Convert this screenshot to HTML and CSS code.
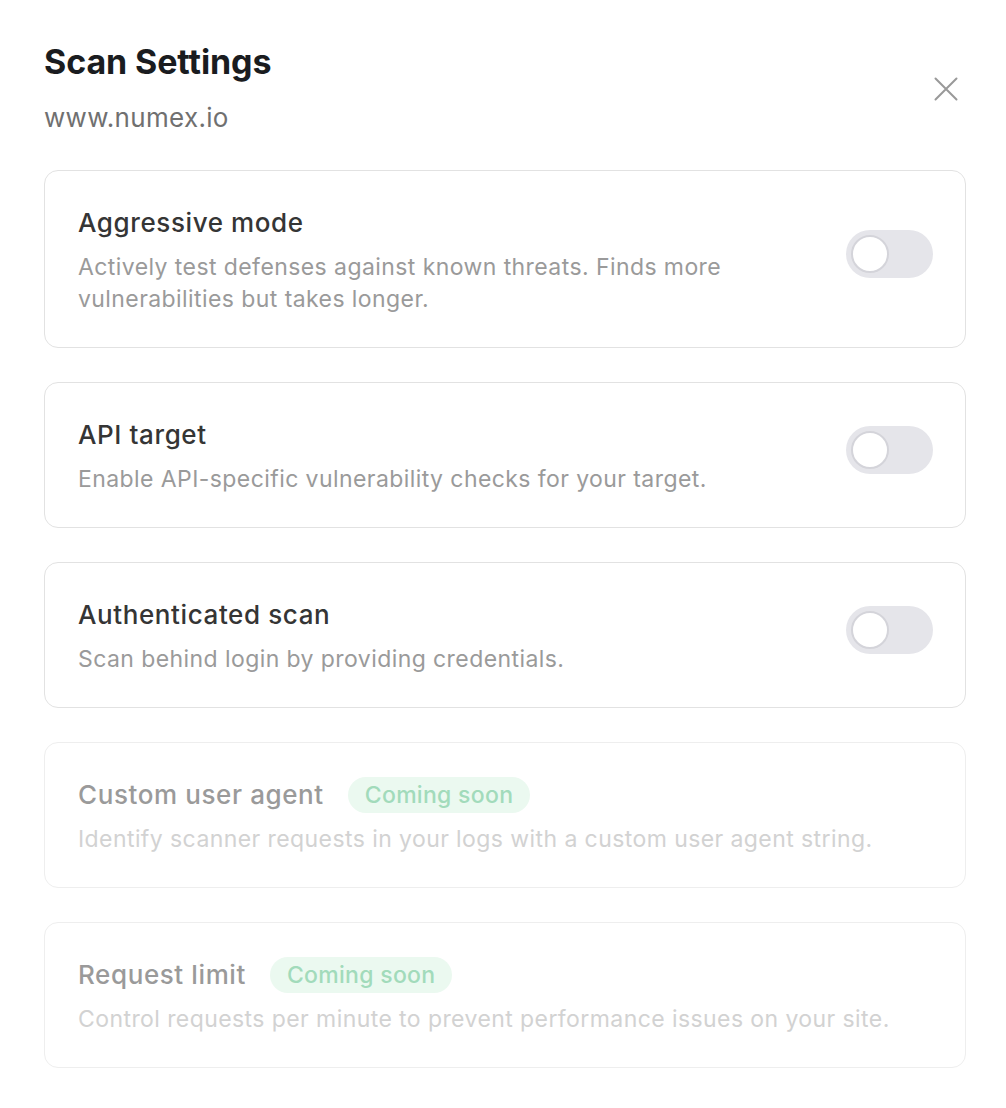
FILE: index.html
```html
<!DOCTYPE html>
<html lang="en">
  <head>
    <meta charset="UTF-8" />
    <meta name="viewport" content="width=device-width, initial-scale=1.0" />
    <title>Scan Settings</title>
    <link rel="stylesheet" href="styles.css">
  </head>
  <body>
    <div class="panel">
      <div class="panel-header">
        <div>
          <h1 class="panel-title">Scan Settings</h1>
          <div class="panel-sub">www.numex.io</div>
        </div>
        <button class="close-btn" aria-label="Close">
          <svg width="26" height="26" viewBox="0 0 26 26" fill="none" stroke="#999" stroke-width="2" stroke-linecap="round">
            <path d="M2.5 2.5 L23.5 23.5 M23.5 2.5 L2.5 23.5" />
          </svg>
        </button>
      </div>

      <div class="setting-list">
        <div class="setting">
          <div class="setting-text">
            <div class="setting-title">Aggressive mode</div>
            <div class="setting-desc">Actively test defenses against known threats. Finds more vulnerabilities but takes longer.</div>
          </div>
          <span class="toggle"><span class="knob"></span></span>
        </div>

        <div class="setting">
          <div class="setting-text">
            <div class="setting-title">API target</div>
            <div class="setting-desc">Enable API-specific vulnerability checks for your target.</div>
          </div>
          <span class="toggle"><span class="knob"></span></span>
        </div>

        <div class="setting">
          <div class="setting-text">
            <div class="setting-title">Authenticated scan</div>
            <div class="setting-desc">Scan behind login by providing credentials.</div>
          </div>
          <span class="toggle"><span class="knob"></span></span>
        </div>

        <div class="setting disabled">
          <div class="setting-text">
            <div class="setting-title">Custom user agent <span class="badge">Coming soon</span></div>
            <div class="setting-desc">Identify scanner requests in your logs with a custom user agent string.</div>
          </div>
        </div>

        <div class="setting disabled">
          <div class="setting-text">
            <div class="setting-title">Request limit <span class="badge">Coming soon</span></div>
            <div class="setting-desc">Control requests per minute to prevent performance issues on your site.</div>
          </div>
        </div>
      </div>
    </div>
  </body>
</html>
```

FILE: styles.css
```css
body {
  margin: 0;
  background: #fff;
  font-family: Inter, "Noto Sans", "Liberation Sans", sans-serif;
}

.panel {
  padding: 40px 40px 40px 44px;
}

.panel-header {
  display: flex;
  justify-content: space-between;
  align-items: flex-start;
}

.panel-title {
  margin: 0;
  font-size: 34px;
  line-height: 44px;
  font-weight: 700;
  letter-spacing: -0.1px;
  color: #1a1c20;
}

.panel-sub {
  margin-top: 19px;
  font-size: 26px;
  line-height: 30px;
  letter-spacing: 0.3px;
  color: #707070;
}

.close-btn {
  margin-top: 36px;
  margin-right: 7px;
  padding: 0;
  border: 0;
  background: none;
  cursor: pointer;
  display: flex;
}

.setting-list {
  margin-top: 37px;
  display: flex;
  flex-direction: column;
  gap: 34px;
}

.setting {
  border: 1px solid #e2e2e2;
  border-radius: 14px;
  padding: 34px 32px 32px 33px;
  display: flex;
  align-items: center;
  gap: 40px;
}

.setting-text {
  flex: 1;
}

.setting-title {
  font-size: 26px;
  line-height: 36px;
  font-weight: 500;
  letter-spacing: 0.6px;
  color: #353535;
  display: flex;
  align-items: center;
  gap: 24px;
}

.setting-desc {
  margin-top: 10px;
  font-size: 23px;
  line-height: 32px;
  letter-spacing: 0.42px;
  color: #9a9a9a;
  max-width: 680px;
}

.toggle {
  width: 87px;
  height: 48px;
  border-radius: 24px;
  background: #e5e5ea;
  display: flex;
  align-items: center;
  padding: 0 5px;
  box-sizing: border-box;
  margin-bottom: 12px;
  flex-shrink: 0;
}

.knob {
  width: 38px;
  height: 38px;
  border-radius: 50%;
  background: #fff;
  border: 2px solid #d4d4da;
  box-sizing: border-box;
}

.setting.disabled {
  border-color: #eeeeee;
}

.disabled .setting-title {
  color: #9a9a9a;
}

.disabled .setting-desc {
  color: #d2d2d2;
  max-width: none;
}

.badge {
  font-size: 23px;
  line-height: 36px;
  font-weight: 500;
  letter-spacing: 0.3px;
  color: #a2dbbb;
  background: #ebf9f0;
  border-radius: 18px;
  padding: 0 17px;
}
```
